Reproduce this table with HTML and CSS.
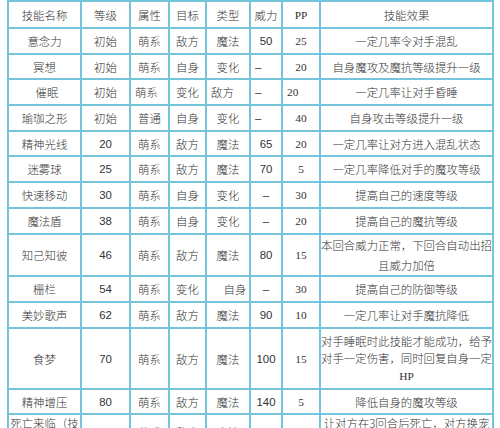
FILE: index.html
```html
<!DOCTYPE html>
<html lang="zh-CN">
<head>
<meta charset="utf-8">
<title>技能表</title>
<link rel="stylesheet" href="styles.css">
</head>
<body>
<table class="skills">
  <colgroup>
    <col class="c1"><col class="c2"><col class="c3"><col class="c4"><col class="c5"><col class="c6"><col class="c7"><col class="c8">
  </colgroup>
  <tr class="hd">
    <th>技能名称</th><th>等级</th><th>属性</th><th>目标</th><th>类型</th><th>威力</th><th class="ser">PP</th><th>技能效果</th>
  </tr>
  <tr>
    <td>意念力</td><td>初始</td><td>萌系</td><td>敌方</td><td>魔法</td><td class="num">50</td><td class="ser">25</td><td>一定几率令对手混乱</td>
  </tr>
  <tr class="s">
    <td>冥想</td><td>初始</td><td>萌系</td><td>自身</td><td>变化</td><td class="num l">–</td><td class="ser">20</td><td>自身魔攻及魔抗等级提升一级</td>
  </tr>
  <tr>
    <td class="pr">催眠</td><td>初始</td><td class="l">萌系</td><td>变化</td><td class="l">敌方</td><td class="num l">–</td><td class="ser l">20</td><td>一定几率让对手昏睡</td>
  </tr>
  <tr>
    <td>瑜珈之形</td><td>初始</td><td>普通</td><td>自身</td><td>变化</td><td class="num l">–</td><td class="ser">40</td><td>自身攻击等级提升一级</td>
  </tr>
  <tr class="s">
    <td>精神光线</td><td class="num">20</td><td>萌系</td><td>敌方</td><td>魔法</td><td class="num">65</td><td class="ser">20</td><td>一定几率让对方进入混乱状态</td>
  </tr>
  <tr>
    <td>迷雾球</td><td class="num">25</td><td>萌系</td><td>敌方</td><td>魔法</td><td class="num">70</td><td class="ser">5</td><td>一定几率降低对手的魔攻等级</td>
  </tr>
  <tr>
    <td>快速移动</td><td class="num">30</td><td>萌系</td><td>自身</td><td>变化</td><td class="num">–</td><td class="ser">30</td><td>提高自己的速度等级</td>
  </tr>
  <tr>
    <td>魔法盾</td><td class="num">38</td><td>萌系</td><td>自身</td><td>变化</td><td class="num">–</td><td class="ser">20</td><td>提高自己的魔抗等级</td>
  </tr>
  <tr class="h2">
    <td>知己知彼</td><td class="num">46</td><td>萌系</td><td>敌方</td><td>魔法</td><td class="num">80</td><td class="ser">15</td><td class="fx2">本回合威力正常，下回合自动出招<br>且威力加倍</td>
  </tr>
  <tr>
    <td>栅栏</td><td class="num">54</td><td>萌系</td><td>变化</td><td class="pr2">自身</td><td class="num">–</td><td class="ser">30</td><td>提高自己的防御等级</td>
  </tr>
  <tr>
    <td>美妙歌声</td><td class="num">62</td><td>萌系</td><td>敌方</td><td>魔法</td><td class="num">90</td><td class="ser">10</td><td>一定几率让对手魔抗降低</td>
  </tr>
  <tr class="h3">
    <td>食梦</td><td class="num">70</td><td>萌系</td><td>敌方</td><td>魔法</td><td class="num">100</td><td class="ser">15</td><td class="fx3">对手睡眠时此技能才能成功，给予<br>对手一定伤害，同时回复自身一定<br><span class="ser">HP</span></td>
  </tr>
  <tr class="s">
    <td>精神增压</td><td class="num">80</td><td>萌系</td><td>敌方</td><td>魔法</td><td class="num">140</td><td class="ser">5</td><td>降低自身的魔攻等级</td>
  </tr>
  <tr class="hl">
    <td class="top">死亡来临（技<br>能）</td><td class="num">–</td><td>萌系</td><td>敌方</td><td>魔法</td><td class="num">–</td><td class="ser">5</td><td class="top">让对方在3回合后死亡，对方换宠<br>物则无效</td>
  </tr>
</table>
</body>
</html>
```
FILE: styles.css
```css
html, body {
  margin: 0;
  padding: 0;
  background: #ffffff;
}

.skills {
  border-collapse: collapse;
  table-layout: fixed;
  width: 485px;
  margin: 0 0 0 7px;
  font-family: "Noto Sans CJK SC", "Noto Sans", sans-serif;
  font-size: 11.4px;
  font-weight: 300;
  color: #333333;
}

.c1 { width: 73px; }
.c2 { width: 49px; }
.c3 { width: 39px; }
.c4 { width: 37px; }
.c5 { width: 44px; }
.c6 { width: 32px; }
.c7 { width: 38px; }
.c8 { width: 173px; }

.skills th,
.skills td {
  border: 2px solid #74c5dc;
  padding: 0;
  text-align: center;
  vertical-align: middle;
  line-height: 18px;
  font-weight: 300;
  white-space: nowrap;
  overflow: visible;
  height: 24px;
}

.skills .hd th {
  height: 25px;
}

.skills .s td {
  height: 23px;
}

.skills .h2 td {
  height: 38px;
}

.skills .h3 td {
  height: 59px;
}

.skills .hl td {
  height: 34px;
  line-height: 16px;
}

.skills .hl .top {
  vertical-align: top;
  padding-top: 0;
}

.skills .fx2 {
  line-height: 20px;
}

.skills .fx3 {
  line-height: 17px;
}

.num {
  font-family: "Liberation Sans", Arial, sans-serif;
}

.ser {
  font-family: "Liberation Serif", "Noto Sans CJK SC", serif;
}

.skills .l {
  text-align: left;
  padding-left: 4px;
}

.skills .pr {
  padding-left: 5px;
}

.skills .pr2 {
  padding-left: 14px;
}
```
